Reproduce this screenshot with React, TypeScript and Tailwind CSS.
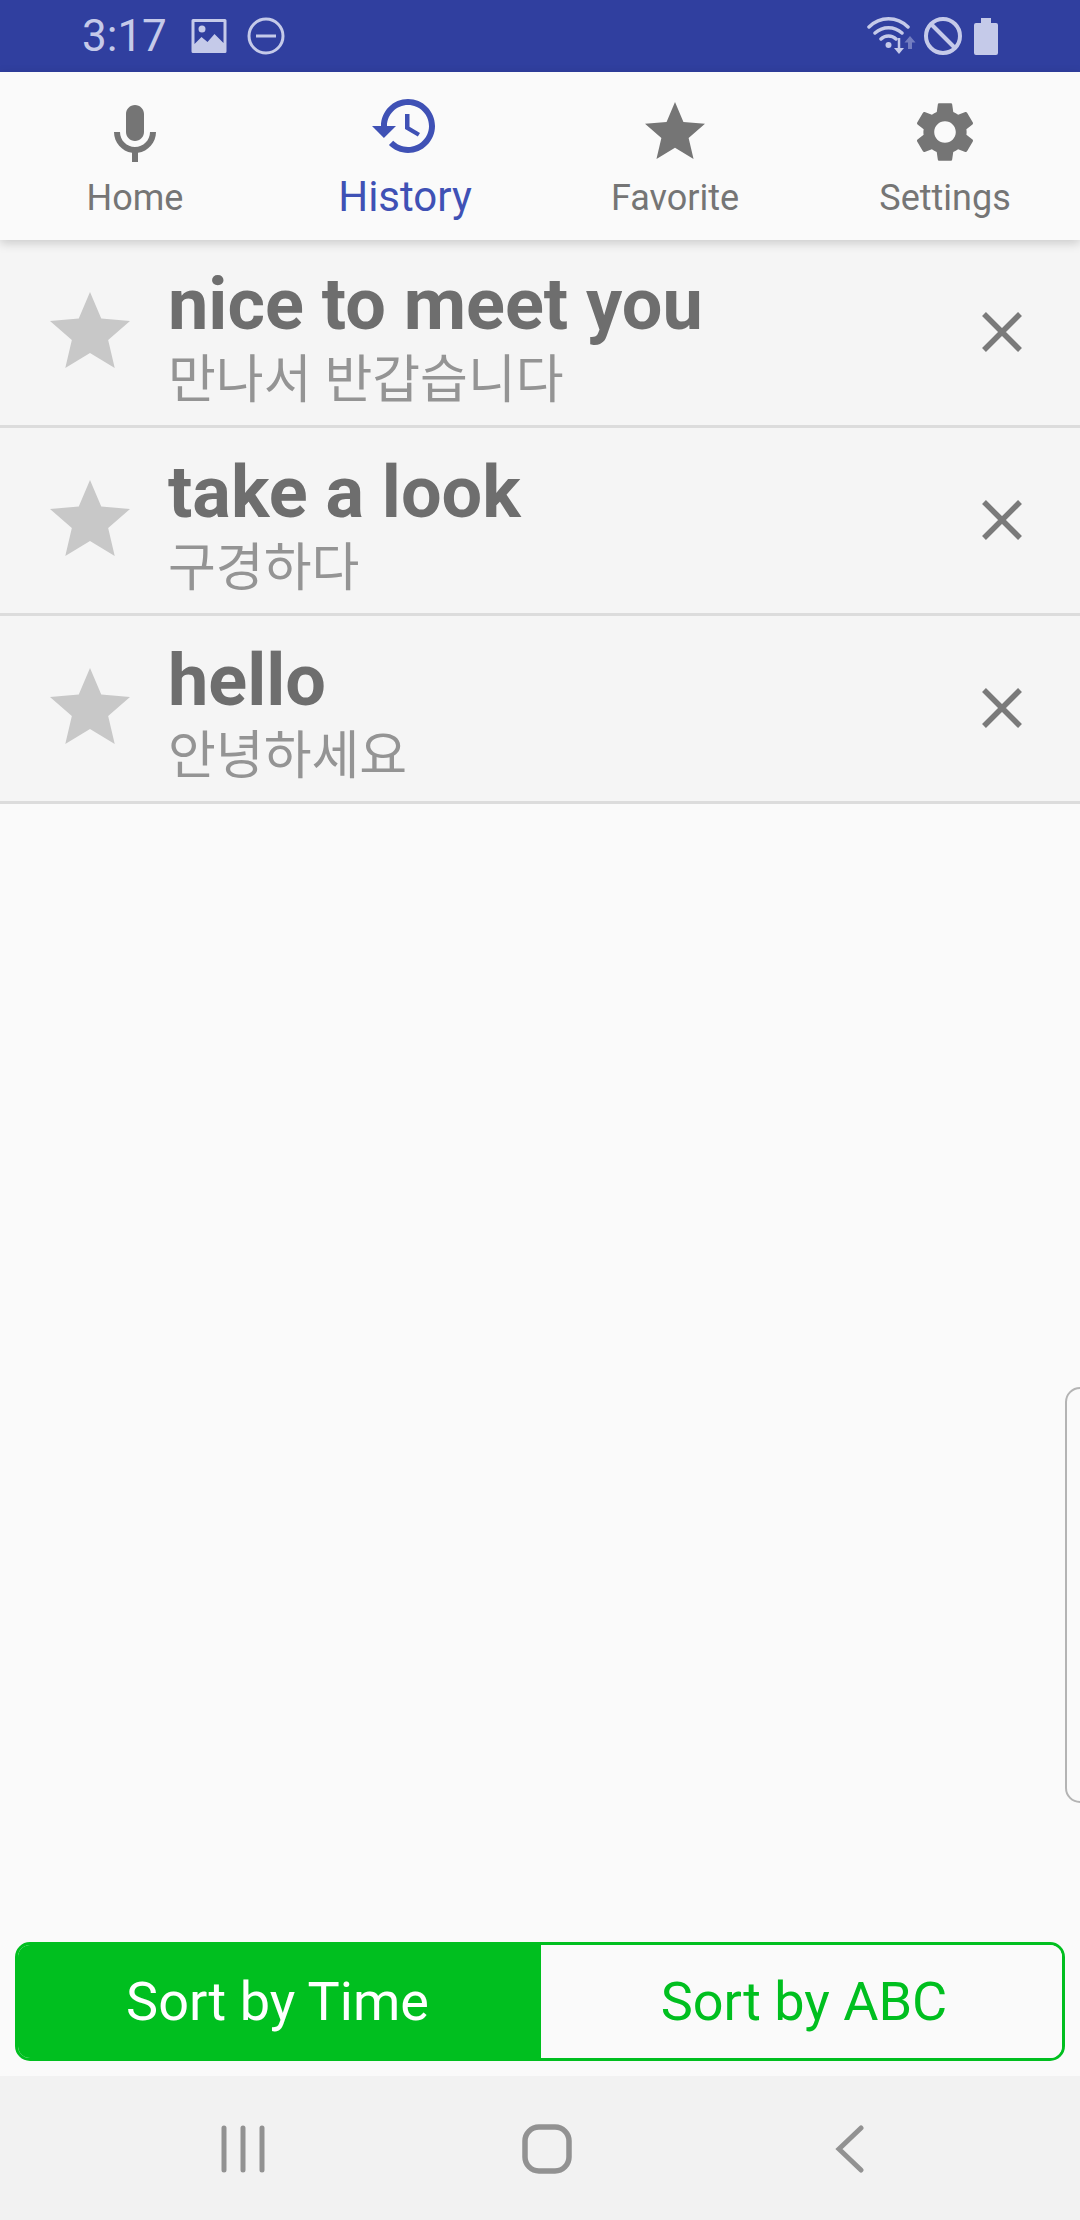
const tabs = [
  {
    label: "Home",
    active: false,
    box: "0 -1 24 24",
    d: "M12 14c1.66 0 3-1.34 3-3V5c0-1.66-1.34-3-3-3S9 3.34 9 5v6c0 1.66 1.34 3 3 3zM17 11c0 2.76-2.24 5-5 5s-5-2.24-5-5H5c0 3.53 2.61 6.43 6 6.92V21h2v-3.08c3.39-.49 6-3.39 6-6.92h-2z",
  },
  {
    label: "History",
    active: true,
    box: "0 2 24 24",
    d: "M13 3c-4.97 0-9 4.03-9 9H1l3.89 3.89.07.14L9 12H6c0-3.87 3.13-7 7-7s7 3.13 7 7-3.13 7-7 7c-1.93 0-3.68-.79-4.94-2.06l-1.42 1.42C8.27 19.99 10.51 21 13 21c4.97 0 9-4.03 9-9s-4.03-9-9-9zm-1 5v5l4.28 2.54.72-1.21-3.5-2.08V8H12z",
  },
  {
    label: "Favorite",
    active: false,
    box: "0 0 24 24",
    d: "M12 17.27L18.18 21l-1.64-7.03L22 9.24l-7.19-.61L12 2 9.19 8.63 2 9.24l5.46 4.73L5.82 21z",
  },
  {
    label: "Settings",
    active: false,
    box: "0 0 24 24",
    d: "M19.14 12.94c.04-.3.06-.61.06-.94 0-.32-.02-.64-.07-.94l2.03-1.58c.18-.14.23-.41.12-.61l-1.92-3.32c-.12-.22-.37-.29-.59-.22l-2.39.96c-.5-.38-1.03-.7-1.62-.94l-.36-2.54c-.04-.24-.24-.41-.48-.41h-3.84c-.24 0-.43.17-.47.41l-.36 2.54c-.59.24-1.13.57-1.62.94l-2.39-.96c-.22-.08-.47 0-.59.22L2.74 8.87c-.12.21-.08.47.12.61l2.03 1.58c-.05.3-.09.63-.09.94s.02.64.07.94l-2.03 1.58c-.18.14-.23.41-.12.61l1.92 3.32c.12.22.37.29.59.22l2.39-.96c.5.38 1.03.7 1.62.94l.36 2.54c.05.24.24.41.48.41h3.84c.24 0 .44-.17.47-.41l.36-2.54c.59-.24 1.13-.56 1.62-.94l2.39.96c.22.08.47 0 .59-.22l1.92-3.32c.12-.22.07-.47-.12-.61l-2.01-1.58zM12 15.6c-1.98 0-3.6-1.62-3.6-3.6s1.62-3.6 3.6-3.6 3.6 1.62 3.6 3.6-1.62 3.6-3.6 3.6z",
  },
];

const rows = [
  { en: "nice to meet you", ko: "만나서 반갑습니다" },
  { en: "take a look", ko: "구경하다" },
  { en: "hello", ko: "안녕하세요" },
];

const star = "M12 17.27L18.18 21l-1.64-7.03L22 9.24l-7.19-.61L12 2 9.19 8.63 2 9.24l5.46 4.73L5.82 21z";

function StatusBar() {
  return (
    <div className="flex h-[72px] shrink-0 items-center bg-[#303f9f] text-[#c5cae9]">
      <span className="ml-[82px] text-[44px] leading-none">3:17</span>
      <svg className="ml-[24px]" width="36" height="36" viewBox="0 0 36 36">
        <path
          fillRule="evenodd"
          fill="currentColor"
          d="M2 1h32a1.5 1.5 0 0 1 1.500 1.500v31a1.500 1.500 0 0 1-1.500 1.500H2a1.500 1.500 0 0 1-1.500-1.500v-31A1.500 1.500 0 0 1 2 1zm1.500 3v22l7-7 6 5 7-8 9 9V4zM11 7.500a3.500 3.500 0 1 0 0 7 3.500 3.500 0 0 0 0-7z"
        />
      </svg>
      <svg className="ml-[20px]" width="38" height="38" viewBox="0 0 38 38" fill="none" stroke="currentColor" strokeWidth="3">
        <circle cx="19" cy="19" r="17" />
        <path d="M9 19h20" />
      </svg>
      <svg className="ml-auto" width="52" height="40" viewBox="0 0 52 40" fill="none" stroke="currentColor">
        <path strokeWidth="3.500" strokeLinecap="round" d="M2 11C13 0 30 0 41 11M8 17c8-7 19-7 27 0M14 23c4-4 11-4 15 0" />
        <circle cx="21.500" cy="29" r="3" fill="currentColor" stroke="none" />
        <path strokeWidth="2.500" d="M32 22v13" />
        <path fill="currentColor" stroke="none" d="M27 32h10l-5 6z" />
        <path stroke="none" fill="currentColor" fillOpacity="0.45" d="M43 20l-5.500 6.500H41V33h4v-6.500h3.500z" />
      </svg>
      <svg className="ml-[4px]" width="40" height="40" viewBox="0 0 40 40" fill="none" stroke="currentColor" strokeWidth="4">
        <circle cx="20" cy="20" r="17" />
        <path d="M8 8l24 24" />
      </svg>
      <svg className="ml-[11px] mr-[82px]" width="24" height="37" viewBox="0 0 24 37">
        <path fill="currentColor" d="M7 0h10v5h5a2 2 0 0 1 2 2v28a2 2 0 0 1-2 2H2a2 2 0 0 1-2-2V7a2 2 0 0 1 2-2h5z" />
      </svg>
    </div>
  );
}

function TabBar() {
  return (
    <div className="relative z-10 flex h-[168px] shrink-0 bg-[#fafafa] shadow-[0_3px_10px_rgba(0,0,0,0.18)]">
      {tabs.map((t) => (
        <div
          key={t.label}
          className={`flex flex-1 flex-col items-center pt-[24px] ${t.active ? "text-[#3f51b5]" : "text-[#757575]"}`}
        >
          <svg width="72" height="72" viewBox={t.box} fill="currentColor">
            <path d={t.d} />
          </svg>
          <span className={t.active ? "text-[42px] leading-[48px] mt-[5px]" : "text-[36px] leading-[48px] mt-[6px]"}>
            {t.label}
          </span>
        </div>
      ))}
    </div>
  );
}

function Row({ en, ko }: { en: string; ko: string }) {
  return (
    <div className="flex h-[188px] items-center border-b-[3px] border-[#dcdcdc] bg-[#f5f5f5]">
      <svg className="ml-[42px] -mt-[2px] shrink-0" width="96" height="96" viewBox="0 0 24 24" fill="#c8c8c8">
        <path d={star} />
      </svg>
      <div className="ml-[30px] flex flex-1 flex-col pt-[14px]">
        <span className="text-[72px] font-bold leading-[78px] text-[#6e6e6e]">{en}</span>
        <span className="mt-[4px] text-[52px] leading-[66px] text-[#949494] font-['Roboto','Noto_Sans_CJK_KR',sans-serif]">
          {ko}
        </span>
      </div>
      <svg className="mr-[57px] -mt-[2px] shrink-0" width="42" height="42" viewBox="0 0 42 42" fill="none" stroke="#7a7a7a" strokeWidth="5.500">
        <path d="M3 3l36 36M39 3L3 39" />
      </svg>
    </div>
  );
}

function SortToggle() {
  return (
    <div className="mx-[15px] mb-[15px] flex h-[119px] shrink-0 overflow-hidden rounded-[15px] border-[3px] border-[#00bf1f] text-[54px]">
      <div className="flex w-[523px] items-center justify-center bg-[#00bf1f] pr-[4px] text-white">Sort by Time</div>
      <div className="flex flex-1 items-center justify-center bg-[#fafafa] pl-[5px] text-[#00bf1f]">Sort by ABC</div>
    </div>
  );
}

function NavBar() {
  return (
    <div className="flex h-[144px] shrink-0 items-center bg-[#f2f2f2]">
      <svg className="ml-[220px] mt-[2px]" width="46" height="48" viewBox="0 0 46 48" fill="none" stroke="#929292" strokeWidth="5" strokeLinecap="round">
        <path d="M4 3v42M23 3v42M42 3v42" />
      </svg>
      <svg className="ml-[256px] mt-[2px]" width="50" height="50" viewBox="0 0 50 50" fill="none" stroke="#929292" strokeWidth="5.500">
        <rect x="3" y="3" width="44" height="44" rx="14" />
      </svg>
      <svg className="ml-[263px] mt-[2px]" width="30" height="48" viewBox="0 0 30 48" fill="none" stroke="#929292" strokeWidth="5" strokeLinecap="round" strokeLinejoin="miter">
        <path d="M26 3L4 24l22 21" />
      </svg>
    </div>
  );
}

export default function App() {
  return (
    <div className="relative flex h-[2220px] w-[1080px] flex-col overflow-hidden bg-[#fafafa] font-['Roboto',sans-serif]">
      <StatusBar />
      <TabBar />
      <div className="flex-1">
        {rows.map((r) => (
          <Row key={r.en} en={r.en} ko={r.ko} />
        ))}
      </div>
      <SortToggle />
      <NavBar />
      {/* edge panel handle */}
      <div className="absolute right-[-3px] top-[1387px] h-[416px] w-[18px] rounded-l-[15px] border-2 border-[#b4b4b4]" />
    </div>
  );
}
